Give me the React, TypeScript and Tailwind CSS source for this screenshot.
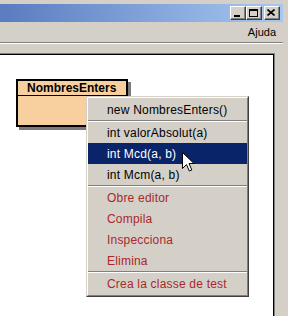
import React from 'react';

const items: { label: string; kind: 'method' | 'action' }[][] = [
  [{ label: 'new NombresEnters()', kind: 'method' }],
  [
    { label: 'int valorAbsolut(a)', kind: 'method' },
    { label: 'int Mcd(a, b)', kind: 'method' },
    { label: 'int Mcm(a, b)', kind: 'method' },
  ],
  [
    { label: 'Obre editor', kind: 'action' },
    { label: 'Compila', kind: 'action' },
    { label: 'Inspecciona', kind: 'action' },
    { label: 'Elimina', kind: 'action' },
  ],
  [{ label: 'Crea la classe de test', kind: 'action' }],
];

const selected = 'int Mcd(a, b)';

function TitleButton({ children }: { children: React.ReactNode }) {
  return (
    <div className="w-[16px] h-[14px] bg-[#d4d0c8] border border-t-white border-l-white border-r-[#404040] border-b-[#404040] flex">
      <div className="flex-1 flex items-center justify-center border-r border-b border-[#808080]">{children}</div>
    </div>
  );
}

function Cursor() {
  return (
    <svg width="13" height="21" viewBox="0 0 13 21" className="absolute left-[182px] top-[152px]">
      <path d="M0.5 0.5 V16.5 L4.5 12.5 L7.3 19 L9.8 18 L7 11.5 H12 Z" fill="white" stroke="black" strokeWidth="1" strokeLinejoin="miter" />
    </svg>
  );
}

export default function App() {
  return (
    <div className="w-[288px] h-[316px] bg-[#d4d0c8] overflow-hidden relative flex flex-col font-['Liberation_Sans',Arial,sans-serif]">
      <div className="h-[4px] shrink-0" />
      <div className="flex shrink-0">
        {/* title bar */}
        <div className="w-[283px] h-[18px] bg-gradient-to-r from-[#5a7cc0] to-[#a8c8f0] flex items-center justify-end pr-[3px]">
          <TitleButton>
            <div className="w-[6px] h-[2px] bg-black mt-[6px] ml-[-1px]" />
          </TitleButton>
          <TitleButton>
            <div className="w-[9px] h-[8px] border border-black border-t-2 ml-[-1px]" />
          </TitleButton>
          <div className="w-[2px]" />
          <TitleButton>
            <svg width="8" height="7" viewBox="0 0 8 7" className="ml-[-1px]">
              <path d="M0.5 0.5 L7.5 6.5 M7.5 0.5 L0.5 6.5" stroke="black" strokeWidth="1.6" />
            </svg>
          </TitleButton>
        </div>
      </div>
      {/* menu bar */}
      <div className="w-[283px] h-[20px] flex items-center justify-end pr-[7px] text-[11px] text-black shrink-0">
        Ajuda
      </div>
      <div className="w-[283px] h-[2px] border-t border-[#808080] border-b border-b-white shrink-0" />
      <div className="h-[9px] shrink-0" />
      {/* canvas */}
      <div className="w-[275px] flex-1 border-t border-r border-[#808080] flex">
        <div className="flex-1 bg-white border-t border-r border-black relative">
          <div className="absolute left-[16px] top-[24px] w-[112px] h-[48px] bg-[#f8cf9f] border-2 border-black shadow-[3px_3px_0_#7a7a7a] flex flex-col">
            <div className="h-[15px] border-b border-black flex items-center pl-[9px] text-[12px] font-bold text-black leading-none">
              NombresEnters
            </div>
          </div>
        </div>
      </div>

      {/* popup menu */}
      <div className="absolute left-[86px] top-[96px] w-[163px] h-[201px] bg-[#d4d0c8] border border-t-[#d4d0c8] border-l-[#d4d0c8] border-r-[#404040] border-b-[#404040]">
        <div className="h-full border border-t-white border-l-white border-r-[#808080] border-b-[#808080] pt-[1px] flex flex-col">
          {items.map((group, gi) => (
            <div key={gi} className="flex flex-col">
              {gi > 0 && <div className="h-[2px] border-t border-[#808080] border-b border-b-white" />}
              {group.map((it) => (
                <div
                  key={it.label}
                  className={`h-[21px] flex items-center pl-[19px] text-[12px] tracking-[0.2px] ${
                    it.label === selected
                      ? 'bg-[#0a246a] text-white'
                      : it.kind === 'action'
                        ? 'text-[#a8282c]'
                        : 'text-black'
                  }`}
                >
                  {it.label}
                </div>
              ))}
            </div>
          ))}
        </div>
      </div>
      <Cursor />
    </div>
  );
}
